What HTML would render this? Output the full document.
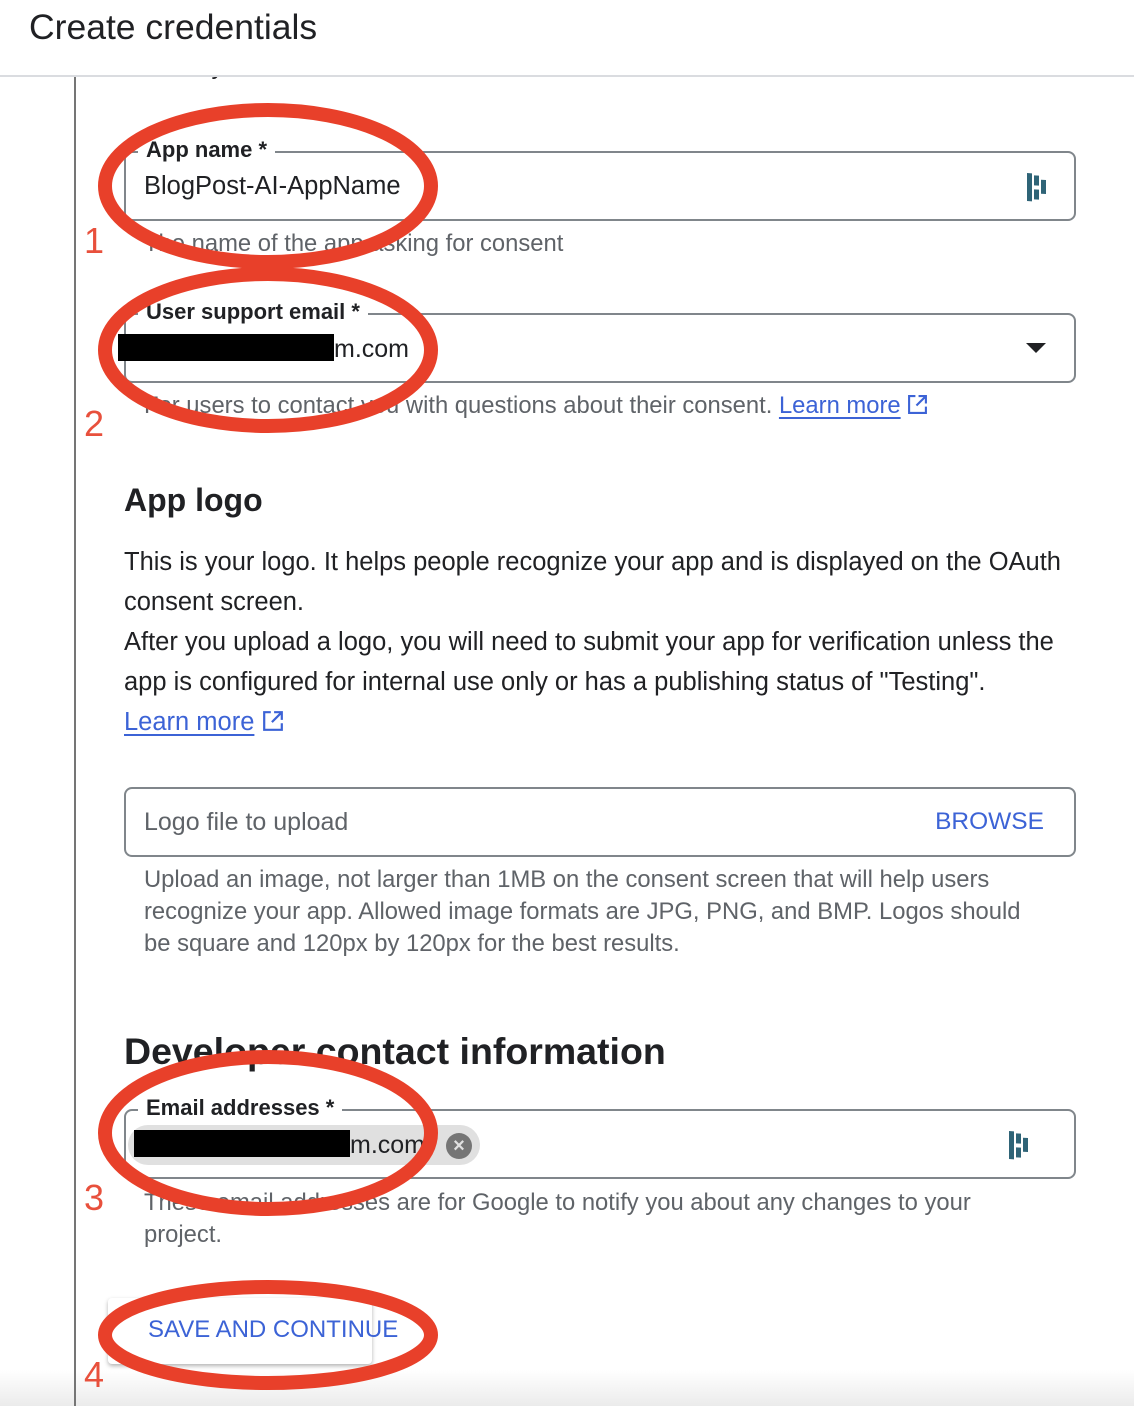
<!DOCTYPE html>
<html><head><meta charset="utf-8"><style>
*{margin:0;padding:0;box-sizing:border-box}
body{width:1134px;height:1406px;overflow:hidden;background:#fff;font-family:"Liberation Sans",Arial,sans-serif;color:#202124;position:relative}
.abs{position:absolute;white-space:nowrap}
.hdr{position:absolute;left:0;top:0;width:1134px;height:77px;border-bottom:2px solid #dadce0;background:#fff;z-index:2}
.vline{position:absolute;left:74px;top:76px;width:2px;height:1330px;background:#757575}
.field{position:absolute;left:124px;width:952px;border:2px solid #80868b;border-radius:8px}
.lbl{position:absolute;left:12px;top:-16px;background:#fff;padding:0 8px;font-size:22px;font-weight:bold;color:#202124}
.val{position:absolute;left:18px;font-size:25px}
.help{font-size:23.8px;color:#5f6368}
a{color:#3c63d6;text-decoration:underline;text-underline-offset:4px}
.p{font-size:25.5px;line-height:40px;color:#202124}
.bottom{position:absolute;left:0;top:1370px;width:1134px;height:36px;background:linear-gradient(#fff,#ebebeb)}
.num{position:absolute;font-size:36px;color:#e8503c;left:84px}
</style></head><body>
<div class="abs" style="left:124px;top:52px;font-size:25px;color:#202124">contact you</div>
<div class="hdr"><div class="abs" style="left:29px;top:7px;font-size:35.5px;color:#202124">Create credentials</div></div>
<div class="bottom"></div>
<div class="vline"></div>

<div class="field" style="top:151px;height:70px">
 <div class="lbl">App name *</div>
 <div class="val" style="top:19px;font-size:25.5px">BlogPost-AI-AppName</div>
 <svg style="position:absolute;right:26px;top:18px" width="22" height="32" viewBox="0 0 22 32"><path d="M1 2h5v28H1zM8 4h5v10H8zM8 18h5v10H8zM15 8h5v14h-5z" fill="#2f6477" transform="skewY(3)"/></svg>
</div>
<div class="abs help" style="left:144px;top:230px">The name of the app asking for consent</div>

<div class="field" style="top:313px;height:70px">
 <div class="lbl">User support email *</div>
 <div class="val" style="top:19px;left:0"><span style="display:inline-block;width:216px;height:27px;background:#000;vertical-align:-4px;margin-left:-8px"></span>m.com</div>
 <div style="position:absolute;right:28px;top:28px;width:0;height:0;border-left:10px solid transparent;border-right:10px solid transparent;border-top:10px solid #202124"></div>
</div>
<div class="abs help" style="left:144px;top:392px">For users to contact you with questions about their consent. <a href="#">Learn more</a> <svg width="21" height="21" viewBox="0 0 20 20" style="vertical-align:-2px"><path d="M8 2H2v16h16v-6M11 2h7v7M18 2l-9 9" fill="none" stroke="#3c63d6" stroke-width="2"/></svg></div>

<div class="abs" style="left:124px;top:482px;font-size:32px;font-weight:bold">App logo</div>
<div class="abs p" style="left:124px;top:542px;white-space:normal;width:955px">This is your logo. It helps people recognize your app and is displayed on the OAuth consent screen.<br>After you upload a logo, you will need to submit your app for verification unless the app is configured for internal use only or has a publishing status of "Testing".<br><a href="#">Learn more</a> <svg width="22" height="22" viewBox="0 0 20 20" style="vertical-align:-2px"><path d="M8 2H2v16h16v-6M11 2h7v7M18 2l-9 9" fill="none" stroke="#3c63d6" stroke-width="2"/></svg></div>

<div class="field" style="top:787px;height:70px">
 <div class="val" style="top:19px;color:#5f6368">Logo file to upload</div>
 <div class="abs" style="right:30px;top:19px;font-size:24.5px;color:#3c63d6;font-weight:500">BROWSE</div>
</div>
<div class="abs help" style="left:144px;top:864px;line-height:32px;white-space:normal;width:880px">Upload an image, not larger than 1MB on the consent screen that will help users recognize your app. Allowed image formats are JPG, PNG, and BMP. Logos should be square and 120px by 120px for the best results.</div>

<div class="abs" style="left:124px;top:1030px;font-size:37.5px;font-weight:bold">Developer contact information</div>
<div class="field" style="top:1109px;height:70px">
 <div class="lbl">Email addresses *</div>
 <div style="position:absolute;left:2px;top:14px;width:352px;height:40px;border-radius:20px;background:#e0e0e0"></div>
 <div class="val" style="top:19px;left:8px"><span style="display:inline-block;width:216px;height:27px;background:#000;vertical-align:-4px"></span>m.com</div>
 <div style="position:absolute;left:320px;top:22px;width:26px;height:26px;border-radius:50%;background:#757575;color:#e0e0e0;font-size:20px;font-weight:bold;text-align:center;line-height:26px">×</div>
 <svg style="position:absolute;right:44px;top:18px" width="22" height="32" viewBox="0 0 22 32"><path d="M1 2h5v28H1zM8 4h5v10H8zM8 18h5v10H8zM15 8h5v14h-5z" fill="#2f6477" transform="skewY(3)"/></svg>
</div>
<div class="abs help" style="left:144px;top:1187px;line-height:32px;white-space:normal;width:850px">These email addresses are for Google to notify you about any changes to your project.</div>

<div style="position:absolute;left:108px;top:1298px;width:264px;height:66px;background:#fff;border-radius:4px;box-shadow:0 2px 4px rgba(0,0,0,.3)"></div>
<div class="abs" style="left:148px;top:1316px;font-size:24px;color:#3c63d6;font-weight:500">SAVE AND CONTINUE</div>

<svg style="position:absolute;left:0;top:0" width="1134" height="1406">
<g fill="none" stroke="#e8402a" stroke-width="14">
<ellipse cx="268" cy="186" rx="163" ry="76"/>
<ellipse cx="268" cy="350" rx="163" ry="76"/>
<ellipse cx="268" cy="1133" rx="163" ry="76"/>
<ellipse cx="268" cy="1335" rx="163" ry="48"/>
</g></svg>
<div class="num" style="top:220px">1</div>
<div class="num" style="top:403px">2</div>
<div class="num" style="top:1177px">3</div>
<div class="num" style="top:1354px">4</div>
</body></html>
